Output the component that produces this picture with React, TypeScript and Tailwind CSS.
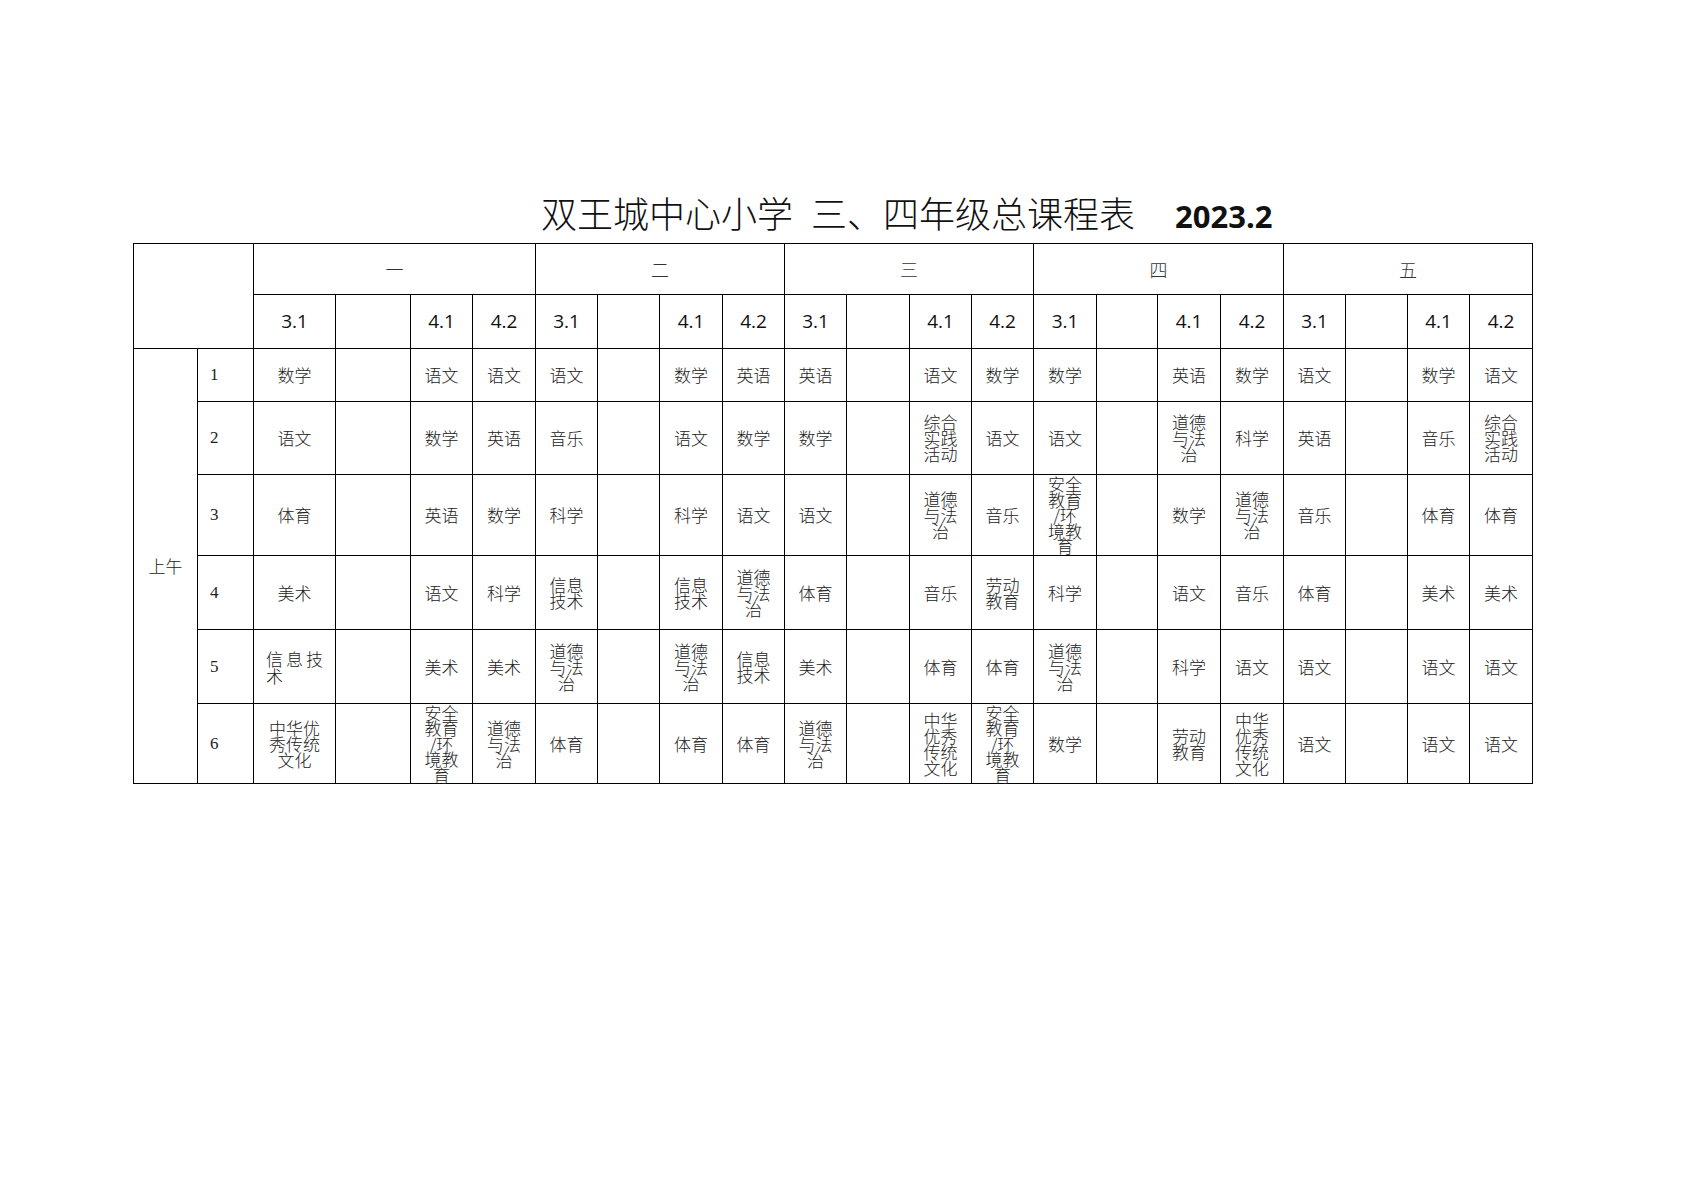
import React from "react"

type Lesson = string | { text: string; left: true }

const days = ["一", "二", "三", "四", "五"]
const classes = ["3.1", "", "4.1", "4.2"]

const colWidths = [
  "w-[64px]", "w-[56px]",
  "w-[82px]", "w-[75px]", "w-[62px]", "w-[63px]",
  "w-[62px]", "w-[62px]", "w-[63px]", "w-[62px]",
  "w-[62px]", "w-[63px]", "w-[62px]", "w-[62px]",
  "w-[63px]", "w-[61px]", "w-[63px]", "w-[63px]",
  "w-[62px]", "w-[62px]", "w-[62px]", "w-[63px]",
]

const rowHeights = ["h-[53px]", "h-[73px]", "h-[81px]", "h-[74px]", "h-[74px]", "h-[80px]"]

const DF = "道德\n与法\n治"
const ZH = "综合\n实践\n活动"
const XX = "信息\n技术"
const LD = "劳动\n教育"
const AQ = "安全\n教育\n/环\n境教\n育"
const ZY = "中华\n优秀\n传统\n文化"

const rows: Lesson[][] = [
  ["数学", "", "语文", "语文", "语文", "", "数学", "英语", "英语", "", "语文", "数学", "数学", "", "英语", "数学", "语文", "", "数学", "语文"],
  ["语文", "", "数学", "英语", "音乐", "", "语文", "数学", "数学", "", ZH, "语文", "语文", "", DF, "科学", "英语", "", "音乐", ZH],
  ["体育", "", "英语", "数学", "科学", "", "科学", "语文", "语文", "", DF, "音乐", AQ, "", "数学", DF, "音乐", "", "体育", "体育"],
  ["美术", "", "语文", "科学", XX, "", XX, DF, "体育", "", "音乐", LD, "科学", "", "语文", "音乐", "体育", "", "美术", "美术"],
  [{ text: "信息技\n术", left: true }, "", "美术", "美术", DF, "", DF, XX, "美术", "", "体育", "体育", DF, "", "科学", "语文", "语文", "", "语文", "语文"],
  ["中华优\n秀传统\n文化", "", AQ, DF, "体育", "", "体育", "体育", DF, "", ZY, AQ, "数学", "", LD, ZY, "语文", "", "语文", "语文"],
]

const cjk = "font-['Noto_Sans_CJK_SC',sans-serif]"
const td = "border border-black p-0 text-center align-middle"

function LessonCell({ lesson }: { lesson: Lesson }) {
  if (typeof lesson !== "string") {
    return (
      <td className={td}>
        <div className={`${cjk} whitespace-pre-line text-left pl-[12px] text-[17px] leading-[17px] tracking-[3px] font-light text-[#222]`}>
          {lesson.text}
        </div>
      </td>
    )
  }
  const lines = lesson.split("\n").length
  return (
    <td className={td}>
      <div
        className={`${cjk} whitespace-pre-line text-[17px] font-light text-[#222] ${
          lines > 4 ? "leading-[15.5px]" : lines > 1 ? "leading-[16px]" : "leading-[20px]"
        }`}
      >
        {lesson}
      </div>
    </td>
  )
}

export default function App() {
  return (
    <div className="w-[1683px] h-[1189px] bg-white">
      <div className="pt-[194px] pl-[541px] flex items-baseline h-[230px]">
        <span className={`${cjk} text-[36px] leading-[36px] font-light text-[#111]`}>双王城中心小学</span>
        <span className={`${cjk} text-[36px] leading-[36px] font-light text-[#111] ml-[18px]`}>三、四年级总课程表</span>
        <span className="font-['Open_Sans',sans-serif] font-bold text-[31px] leading-[36px] text-[#111] ml-[40px]">2023.2</span>
      </div>

      <table className="table-fixed border-collapse w-[1399px] ml-[133px] mt-[13px]">
        <colgroup>
          {colWidths.map((w, i) => (
            <col key={i} className={w} />
          ))}
        </colgroup>
        <tbody>
          <tr className="h-[51px]">
            <td rowSpan={2} colSpan={2} className={td} />
            {days.map((d) => (
              <td key={d} colSpan={4} className={td}>
                <span className={`${cjk} text-[18px] font-light text-[#333]`}>{d}</span>
              </td>
            ))}
          </tr>
          <tr className="h-[54px]">
            {days.flatMap((d) =>
              classes.map((c, i) => (
                <td key={d + i} className={td}>
                  <span className="font-['Open_Sans',sans-serif] text-[19px] text-[#111]">{c}</span>
                </td>
              ))
            )}
          </tr>
          {rows.map((row, r) => (
            <tr key={r} className={rowHeights[r]}>
              {r === 0 && (
                <td rowSpan={6} className={td}>
                  <span className={`${cjk} text-[17px] font-light text-[#222]`}>上午</span>
                </td>
              )}
              <td className={`${td} text-left pl-[12px]`}>
                <span className="font-['Liberation_Serif',serif] text-[17px] text-[#222]">{r + 1}</span>
              </td>
              <LessonCell lesson={row[0]} />
              <td className={td} />
              {row.slice(2).map((lesson, i) => (
                <LessonCell key={i} lesson={lesson} />
              ))}
            </tr>
          ))}
        </tbody>
      </table>
    </div>
  )
}
